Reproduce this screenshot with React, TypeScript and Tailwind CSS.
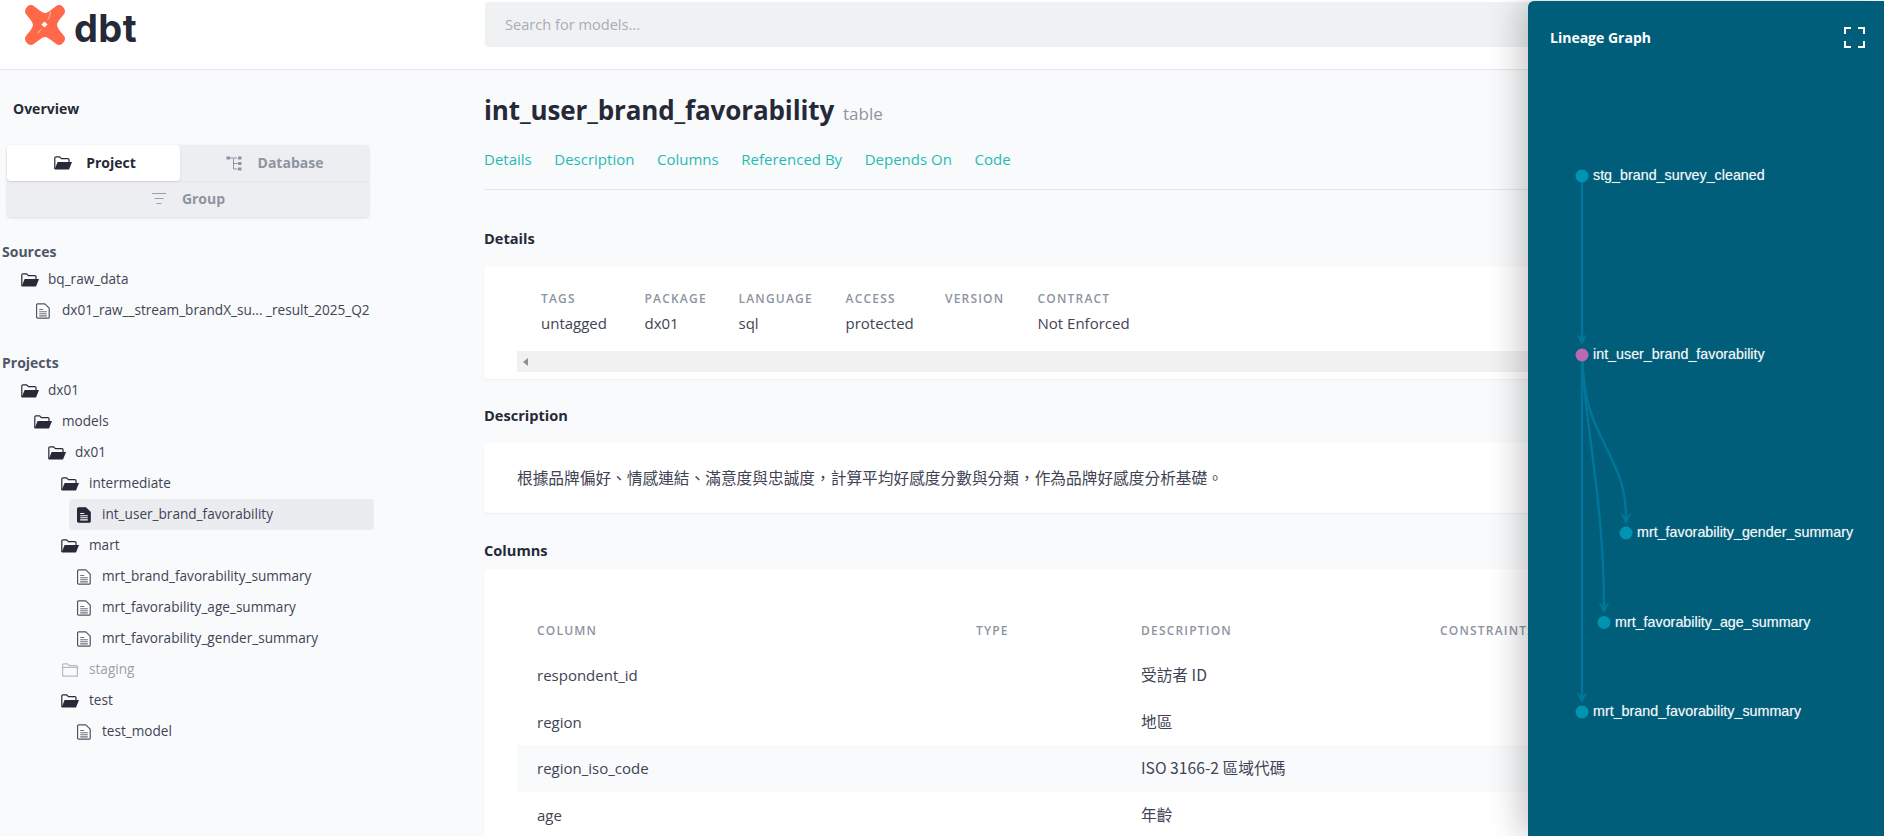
import React from "react";

const sans = "font-['Open_Sans','Noto_Sans_CJK_TC',sans-serif]";
const cjk = "font-['Noto_Sans_CJK_TC','Open_Sans',sans-serif]";

function Logo() {
  return (
    <svg width="42" height="42" viewBox="0 0 42 42" className="shrink-0">
      <path
        fill="#ff694a"
        d="M3 3C4.500 1 7 .5 9 1.500C13 4 17 8.500 21 9C25 8.500 29 4 33 1.500C35 .5 37.500 1 39 3C41 5 41.500 7.500 40.500 9.500C38 13 33.500 17 33 21C33.500 25 38 29 40.500 32.500C41.500 34.500 41 37 39 39C37.500 41 35 41.500 33 40.500C29 38 25 33.500 21 33C17 33.500 13 38 9 40.500C7 41.500 4.500 41 3 39C1 37 .5 34.500 1.500 32.500C4 29 8.500 25 9 21C8.500 17 4 13 1.500 9.500C.5 7.500 1 5 3 3Z"
      />
      <path fill="#fff" d="M20.500 17.500l3 3-3 3-3-3z" />
      <path fill="none" stroke="#fff" strokeWidth="0.700" opacity="0.800" d="M26.500 7.500C26 11 25.500 13 23.800 15.500M14 29.500C14.500 27.500 15.500 26.500 17.500 25.500" />
    </svg>
  );
}

function FolderOpen({ className = "" }: { className?: string }) {
  return (
    <svg width="18" height="14" viewBox="0 0 18 14" className={"shrink-0 " + className}>
      <path fill="none" stroke="#262a38" strokeWidth="1.200" d="M.8 13V2A1.200 1.200 0 0 1 2 .8h3.600l1.800 1.800h6.400A1.200 1.200 0 0 1 15 3.800V6" />
      <path fill="#262a38" d="M.6 13.600L3.600 6H18l-3 7.600z" />
    </svg>
  );
}

function FolderClosed() {
  return (
    <svg width="18" height="14" viewBox="0 0 18 14" className="shrink-0">
      <path fill="none" stroke="#b6bac3" strokeWidth="1.200" d="M1.600 13.200V1.800A1 1 0 0 1 2.600 .8h4l1.800 1.800h7a1 1 0 0 1 1 1v9.600z" />
      <path fill="none" stroke="#b6bac3" strokeWidth="1.200" d="M1.600 4.400h15.800" />
    </svg>
  );
}

function FileIcon({ filled = false }: { filled?: boolean }) {
  return (
    <svg width="14" height="16" viewBox="0 0 14 16" className="shrink-0">
      <path
        fill={filled ? "#262a38" : "#fff"}
        stroke={filled ? "#262a38" : "#4f5463"}
        strokeWidth="1.200"
        strokeLinejoin="round"
        d="M1.600 .8h7.200l4.400 4.400v9a1 1 0 0 1-1 1H1.600a1 1 0 0 1-1-1v-12.400a1 1 0 0 1 1-1z"
      />
      <path
        fill="none"
        stroke={filled ? "#fff" : "#6b7080"}
        strokeWidth="1.100"
        d="M3.200 6.500h4M3.200 8.700h7.600M3.200 10.800h7.600M3.200 12.900h7.600"
      />
    </svg>
  );
}

function TreeIcon() {
  return (
    <svg width="16" height="16" viewBox="0 0 16 16" className="shrink-0">
      <path fill="none" stroke="#8d94a1" strokeWidth="1" d="M7.500 3.500v10.500h4M7.500 8.500h4M3 3h8" />
      <rect x="0.500" y="1.500" width="3.500" height="3" fill="#8d94a1" />
      <rect x="12" y="1.500" width="3.500" height="3" fill="#8d94a1" />
      <rect x="12" y="7" width="3.500" height="3" fill="#8d94a1" />
      <rect x="12" y="12.500" width="3.500" height="3" fill="#8d94a1" />
    </svg>
  );
}

function FilterIcon() {
  return (
    <svg width="16" height="13" viewBox="0 0 16 13" className="shrink-0">
      <path stroke="#9aa0ab" strokeWidth="1.200" d="M1 1.500h14M3.500 6.500h9M5.500 11.500h5" />
    </svg>
  );
}

function Row({ pad, icon, label, muted = false }: { pad: string; icon: React.ReactNode; label: string; muted?: boolean }) {
  return (
    <div className={"flex h-[31px] items-center " + pad}>
      {icon}
      <span className={"whitespace-nowrap text-[13.600px] " + (muted ? "text-[#9aa0ab]" : "text-[#3f4454]")}>{label}</span>
    </div>
  );
}

function Sidebar() {
  return (
    <aside className="w-[484px] shrink-0">
      <div className="pl-[13px] pt-[29px] text-[14px] leading-[20px] font-bold text-[#262a38]">Overview</div>
      <div className="ml-[7px] mt-[26px] w-[362px] rounded bg-[#edeef1] shadow-[0_1px_3px_rgba(0,0,0,0.12)]">
        <div className="flex h-[36px]">
          <div className="flex w-[173px] items-center justify-center gap-[14px] rounded bg-white pb-[1px] pl-[3px] shadow-[0_1px_2px_rgba(0,0,0,0.1)]">
            <FolderOpen />
            <span className="text-[14px] font-bold text-[#262a38]">Project</span>
          </div>
          <div className="flex flex-1 items-center justify-center gap-[16px] pb-[1px]">
            <TreeIcon />
            <span className="text-[14px] font-bold text-[#8d94a1]">Database</span>
          </div>
        </div>
        <div className="flex h-[36px] items-center justify-center gap-[15px] border-t border-[#e6e7ea] pb-[2px]">
          <FilterIcon />
          <span className="text-[14px] font-bold text-[#8d94a1]">Group</span>
        </div>
      </div>

      <div className="mt-[25px] pl-[2px] text-[14px] leading-[20px] font-bold text-[#505565]">Sources</div>
      <div className="mt-[2px]">
        <Row pad="pl-[21px] gap-[9px]" icon={<FolderOpen />} label="bq_raw_data" />
        <Row pad="pl-[36px] gap-[12px]" icon={<FileIcon />} label="dx01_raw__stream_brandX_su... _result_2025_Q2" />
      </div>

      <div className="mt-[27px] pl-[2px] text-[14px] leading-[20px] font-bold text-[#505565]">Projects</div>
      <div className="mt-[2px]">
        <Row pad="pl-[21px] gap-[9px]" icon={<FolderOpen />} label="dx01" />
        <Row pad="pl-[34px] gap-[10px]" icon={<FolderOpen />} label="models" />
        <Row pad="pl-[48px] gap-[9px]" icon={<FolderOpen />} label="dx01" />
        <Row pad="pl-[61px] gap-[10px]" icon={<FolderOpen />} label="intermediate" />
        <div className="ml-[69px] flex h-[31px] w-[305px] items-center gap-[11px] rounded bg-[#ebecef] pl-[8px]">
          <FileIcon filled />
          <span className="whitespace-nowrap text-[13.600px] text-[#3f4454]">int_user_brand_favorability</span>
        </div>
        <Row pad="pl-[61px] gap-[10px]" icon={<FolderOpen />} label="mart" />
        <Row pad="pl-[77px] gap-[11px]" icon={<FileIcon />} label="mrt_brand_favorability_summary" />
        <Row pad="pl-[77px] gap-[11px]" icon={<FileIcon />} label="mrt_favorability_age_summary" />
        <Row pad="pl-[77px] gap-[11px]" icon={<FileIcon />} label="mrt_favorability_gender_summary" />
        <Row pad="pl-[61px] gap-[10px]" icon={<FolderClosed />} label="staging" muted />
        <Row pad="pl-[61px] gap-[10px]" icon={<FolderOpen />} label="test" />
        <Row pad="pl-[77px] gap-[11px]" icon={<FileIcon />} label="test_model" />
      </div>
    </aside>
  );
}

const details = [
  ["TAGS", "untagged"],
  ["PACKAGE", "dx01"],
  ["LANGUAGE", "sql"],
  ["ACCESS", "protected"],
  ["VERSION", ""],
  ["CONTRACT", "Not Enforced"],
];

const columns = [
  ["respondent_id", "受訪者 ID"],
  ["region", "地區"],
  ["region_iso_code", "ISO 3166-2 區域代碼"],
  ["age", "年齡"],
];

const description = "根據品牌偏好、情感連結、滿意度與忠誠度\uFF0C計算平均好感度分數與分類\uFF0C作為品牌好感度分析基礎。";

function Heading({ children, className }: { children: React.ReactNode; className: string }) {
  return <h6 className={"text-[14.600px] leading-[20px] font-bold text-[#262a38] " + className}>{children}</h6>;
}

function Main() {
  return (
    <main className="min-w-0 flex-1 pr-[4px]">
      <div className="flex items-baseline gap-[9px] pt-[22px]">
        <h1 className="text-[26px] leading-[36px] font-bold tracking-[-0.005em] text-[#262a38]">int_user_brand_favorability</h1>
        <span className="text-[17px] text-[#8d94a1]">table</span>
      </div>
      <nav className="mt-[21px] flex h-[20px] items-center gap-[22.600px] text-[15px] text-[#1fbcb4]">
        <span>Details</span>
        <span>Description</span>
        <span>Columns</span>
        <span>Referenced By</span>
        <span>Depends On</span>
        <span>Code</span>
      </nav>
      <div className="mt-[20px] h-px bg-[#e4e6ea]" />

      <Heading className="mt-[38px]">Details</Heading>
      <section className="mt-[18px] h-[113px] rounded bg-white pt-[23px] shadow-[0_1px_2px_rgba(0,0,0,0.06)]">
        <div className="ml-[57px] grid grid-cols-[103.500px_94px_107px_99.500px_92.500px_auto]">
          {details.map(([k]) => (
            <div key={k} className="text-[12px] leading-[20px] font-semibold tracking-[0.1em] text-[#8d94a1]">{k}</div>
          ))}
          {details.map(([k, v]) => (
            <div key={k} className="mt-[4px] h-[20px] text-[15px] leading-[20px] text-[#3f4454]">{v}</div>
          ))}
        </div>
        <div className="ml-[33px] mt-[18px] flex h-[21px] items-center bg-[#f1f1f1] pl-[6px]">
          <div className="h-0 w-0 border-y-[4px] border-r-[5px] border-y-transparent border-r-[#8f8f8f]" />
        </div>
      </section>

      <Heading className="mt-[26px]">Description</Heading>
      <section className={"mt-[18px] flex h-[70px] items-center rounded bg-white pl-[33px] text-[15.700px] text-[#3f4454] shadow-[0_1px_2px_rgba(0,0,0,0.06)] " + cjk}>
        {description}
      </section>

      <Heading className="mt-[27px]">Columns</Heading>
      <section className="mt-[9px] rounded bg-white pl-[33px] pt-[52px] shadow-[0_1px_2px_rgba(0,0,0,0.06)]">
        <div className="grid h-[20px] grid-cols-[439px_165px_299px_auto] items-center pl-[20px] text-[12px] font-semibold tracking-[0.1em] text-[#8d94a1]">
          <span>COLUMN</span>
          <span>TYPE</span>
          <span>DESCRIPTION</span>
          <span>CONSTRAINTS</span>
        </div>
        <div className="mt-[11px]">
          {columns.map(([name, desc], i) => (
            <div
              key={name}
              className={
                "grid h-[46.500px] grid-cols-[439px_165px_299px_auto] items-center pl-[20px] text-[15px] text-[#3f4454] " +
                (i === 2 ? "bg-[#f9fafc]" : "")
              }
            >
              <span>{name}</span>
              <span />
              <span className={"text-[15.700px] " + cjk}>{desc}</span>
              <span />
            </div>
          ))}
        </div>
      </section>
    </main>
  );
}

function Arrow({ x, y }: { x: number; y: number }) {
  return <polygon fill="#00769b" points={`${x},${y} ${x - 5.5},${y - 11} ${x},${y - 7} ${x + 5.5},${y - 11}`} />;
}

const nodes: [number, number, string, string][] = [
  [1582, 176, "stg_brand_survey_cleaned", "#0094b3"],
  [1582, 355, "int_user_brand_favorability", "#bd68b3"],
  [1626, 533, "mrt_favorability_gender_summary", "#0094b3"],
  [1604, 622.500, "mrt_favorability_age_summary", "#0094b3"],
  [1582, 712, "mrt_brand_favorability_summary", "#0094b3"],
];

function Lineage() {
  return (
    <div className="absolute right-0 top-[1px] h-[835px] w-[356px] rounded-tl-md bg-[#005e7a] shadow-[-8px_0_32px_rgba(0,0,0,0.22)]">
      <div className="flex items-center justify-between pl-[22px] pr-[19px] pt-[26px]">
        <span className="text-[14px] leading-[20px] font-bold text-white">Lineage Graph</span>
        <svg width="21" height="21" viewBox="0 0 21 21">
          <path fill="none" stroke="#fff" strokeWidth="2" d="M1 7V1h6M14 1h6v6M20 14v6h-6M7 20H1v-6" />
        </svg>
      </div>
      <svg className="absolute inset-0" width="356" height="835" viewBox="1528 1 356 835">
        <g fill="none" stroke="#00769b" strokeWidth="2.400">
          <path d="M1582 176V340" />
          <path d="M1582 355V698" />
          <path d="M1582 355C1584 400 1590 415 1605 445C1620 475 1626 490 1626 519" />
          <path d="M1582 355C1584 420 1604 500 1604 607" />
        </g>
        <Arrow x={1582} y={345} />
        <Arrow x={1582} y={703} />
        <Arrow x={1626} y={524} />
        <Arrow x={1604} y={613} />
        {nodes.map(([x, y, label, color]) => (
          <g key={label}>
            <circle cx={x} cy={y} r="6.500" fill={color} />
            <text
              x={x + 11}
              y={y + 4}
              fontSize="14.300"
              fontFamily="'Liberation Sans',Arial,sans-serif"
              fill="#f2f7f8"
              className="[text-shadow:0_0_1px_rgba(255,255,255,0.45)]"
            >
              {label}
            </text>
          </g>
        ))}
      </svg>
    </div>
  );
}

export default function App() {
  return (
    <div className={"relative h-[836px] w-[1884px] overflow-hidden bg-[#f9fafc] " + sans}>
      <header className="flex h-[70px] border-b border-[#e7e9ec] bg-white">
        <div className="flex w-[484px] shrink-0 items-start pl-[24px] pt-[4px]">
          <Logo />
          <span className="ml-[8px] mt-[3px] font-['Inter',sans-serif] text-[38px] leading-[42px] font-bold tracking-[0.01em] text-[#262a38]">dbt</span>
        </div>
        <div className="ml-[1px] mt-[2px] flex h-[45px] w-[1340px] items-center rounded bg-[#f0f1f3] pl-[20px] pt-[1px] text-[14.600px] text-[#a6adb8]">
          Search for models...
        </div>
      </header>
      <div className="flex">
        <Sidebar />
        <Main />
      </div>
      <Lineage />
    </div>
  );
}
